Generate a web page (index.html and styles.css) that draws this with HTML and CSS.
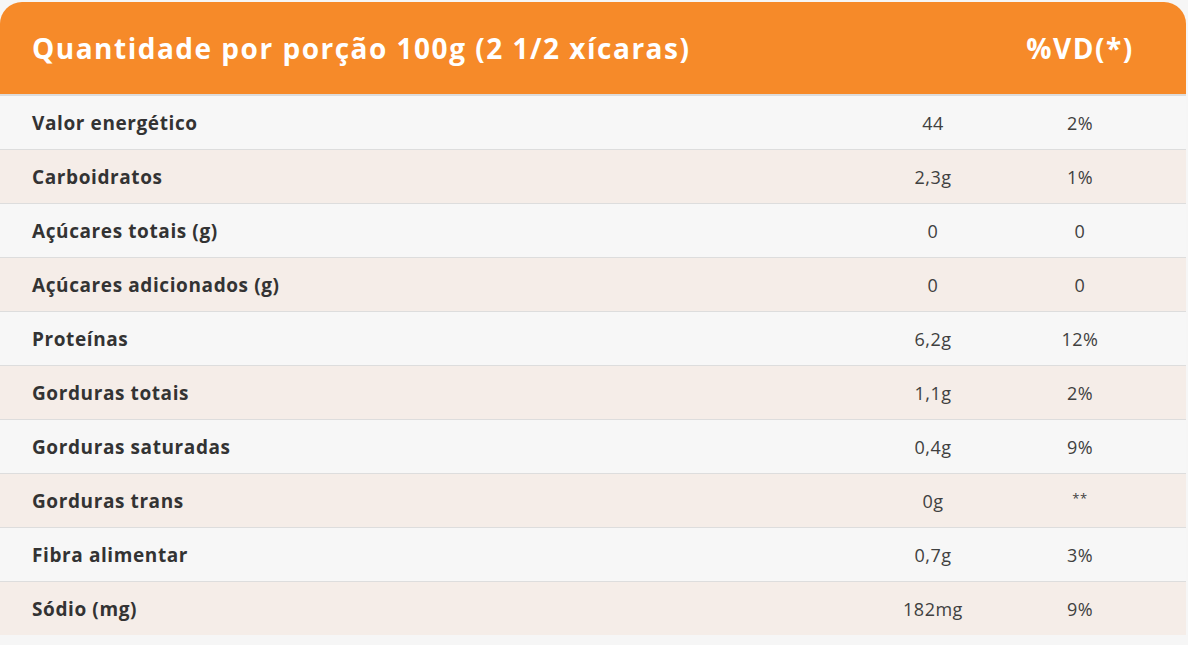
FILE: index.html
```html
<!DOCTYPE html>
<html lang="pt-BR">
<head>
<meta charset="utf-8">
<title>Tabela nutricional</title>
<link rel="stylesheet" href="styles.css">
</head>
<body>
<div class="table">
  <div class="head">
    <div class="head-title">Quantidade por porção 100g (2 1/2 xícaras)</div>
    <div class="head-vd">%VD(*)</div>
  </div>
  <div class="row"><div class="label">Valor energético</div><div class="val">44</div><div class="vd">2%</div></div>
  <div class="row alt"><div class="label">Carboidratos</div><div class="val">2,3g</div><div class="vd">1%</div></div>
  <div class="row"><div class="label">Açúcares totais (g)</div><div class="val">0</div><div class="vd">0</div></div>
  <div class="row alt"><div class="label">Açúcares adicionados (g)</div><div class="val">0</div><div class="vd">0</div></div>
  <div class="row"><div class="label">Proteínas</div><div class="val">6,2g</div><div class="vd">12%</div></div>
  <div class="row alt"><div class="label">Gorduras totais</div><div class="val">1,1g</div><div class="vd">2%</div></div>
  <div class="row"><div class="label">Gorduras saturadas</div><div class="val">0,4g</div><div class="vd">9%</div></div>
  <div class="row alt"><div class="label">Gorduras trans</div><div class="val">0g</div><div class="vd stars">**</div></div>
  <div class="row"><div class="label">Fibra alimentar</div><div class="val">0,7g</div><div class="vd">3%</div></div>
  <div class="row alt last"><div class="label">Sódio (mg)</div><div class="val">182mg</div><div class="vd">9%</div></div>
</div>
</body>
</html>
```
FILE: styles.css
```css
html, body {
  margin: 0;
  padding: 0;
  background: #f6f6f6;
}
body {
  font-family: "Open Sans", "Liberation Sans", sans-serif;
  color: #333333;
}
.table {
  margin: 2px 2px 0 0;
}
.head {
  display: grid;
  grid-template-columns: 1fr 144px;
  align-items: center;
  height: 92px;
  padding: 0 34px 0 32px;
  background: #f68a29;
  border-radius: 22px 22px 0 0;
  border-bottom: 2px solid #dcdcdc;
  color: #ffffff;
  font-weight: 700;
  font-size: 28px;
  letter-spacing: 1.5px;
}
.head-title {
  white-space: nowrap;
}
.head-vd {
  text-align: center;
  white-space: nowrap;
}
.row {
  display: grid;
  grid-template-columns: 1fr 150px 144px;
  align-items: center;
  height: 53px;
  padding: 0 34px 0 32px;
  background: #f7f7f7;
  border-bottom: 1px solid #dddddd;
}
.row.alt {
  background: #f5ede8;
}
.row.last {
  border-bottom: none;
}
.label {
  font-weight: 700;
  font-size: 19px;
  letter-spacing: 0.6px;
}
.val, .vd {
  text-align: center;
  font-size: 18px;
  font-weight: 400;
  letter-spacing: 0.5px;
  color: #404040;
}
.stars {
  font-size: 13px;
  padding-bottom: 6px;
}
```
